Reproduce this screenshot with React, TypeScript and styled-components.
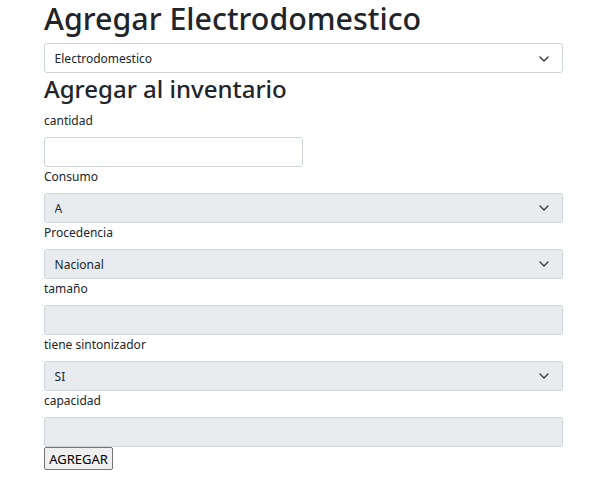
import React from 'react';
import styled, { createGlobalStyle } from 'styled-components';

const GlobalStyle = createGlobalStyle`
  body {
    margin: 0;
    background: #fff;
    color: #212529;
    font-family: "Noto Sans", "Open Sans", sans-serif;
  }
`;

const Page = styled.div`
  width: 519px;
  margin-left: 44px;
`;

const Title = styled.h1`
  margin: 0 0 5px;
  font-size: 30.4px;
  font-weight: 500;
  line-height: 38px;
`;

const Subtitle = styled.h2`
  margin: 0 0 6px;
  font-size: 24px;
  font-weight: 500;
  line-height: 32px;
`;

const Field = styled.div`
  display: flex;
  flex-direction: column;
`;

const Label = styled.label`
  font-size: 12px;
  line-height: 19.2px;
  margin-bottom: 6.4px;
`;

const Control = styled.input<{ $half?: boolean }>`
  box-sizing: border-box;
  width: ${p => (p.$half ? '259px' : '100%')};
  height: 30.4px;
  padding: 4.8px 9.6px;
  font: inherit;
  font-size: 12px;
  color: #212529;
  background: #fff;
  border: 0.8px solid #ced4da;
  border-radius: 3px;

  &:disabled {
    background: #e9ecef;
  }
`;

const SelectWrap = styled.div`
  position: relative;
`;

const Select = styled.select`
  box-sizing: border-box;
  width: 100%;
  height: 30.4px;
  padding: 4.8px 36px 4.8px 9.6px;
  font: inherit;
  font-size: 12px;
  color: #212529;
  background: #fff;
  border: 0.8px solid #ced4da;
  border-radius: 3px;
  appearance: none;

  &:disabled {
    background: #e9ecef;
    opacity: 1;
  }
`;

const Chevron = styled.svg`
  position: absolute;
  right: 14px;
  top: 12.5px;
  width: 10px;
  height: 6px;
  pointer-events: none;
`;

const SubmitButton = styled.button`
  display: block;
  box-sizing: border-box;
  width: 69px;
  height: 23px;
  padding: 1px 0;
  font-family: inherit;
  font-size: 13px;
  color: #000;
  background: #efefef;
  border: 1px solid #767676;
  border-radius: 2px;
`;

const ArrowIcon = () => (
  <Chevron viewBox="0 0 10 6" fill="none">
    <path d="M1 1l4 4 4-4" stroke="#343a40" strokeWidth="1.4" strokeLinecap="round" strokeLinejoin="round" />
  </Chevron>
);

const SelectField: React.FC<{ value: string; disabled?: boolean }> = ({ value, disabled }) => (
  <SelectWrap>
    <Select disabled={disabled} defaultValue={value}>
      <option>{value}</option>
    </Select>
    <ArrowIcon />
  </SelectWrap>
);

export default function App() {
  return (
    <Page>
      <GlobalStyle />
      <Title>Agregar Electrodomestico</Title>
      <SelectField value="Electrodomestico" />
      <Subtitle>Agregar al inventario</Subtitle>
      <Field>
        <Label>cantidad</Label>
        <Control $half type="number" />
      </Field>
      <Field>
        <Label>Consumo</Label>
        <SelectField value="A" disabled />
      </Field>
      <Field>
        <Label>Procedencia</Label>
        <SelectField value="Nacional" disabled />
      </Field>
      <Field>
        <Label>tamaño</Label>
        <Control disabled />
      </Field>
      <Field>
        <Label>tiene sintonizador</Label>
        <SelectField value="SI" disabled />
      </Field>
      <Field>
        <Label>capacidad</Label>
        <Control disabled />
      </Field>
      <SubmitButton>AGREGAR</SubmitButton>
    </Page>
  );
}
